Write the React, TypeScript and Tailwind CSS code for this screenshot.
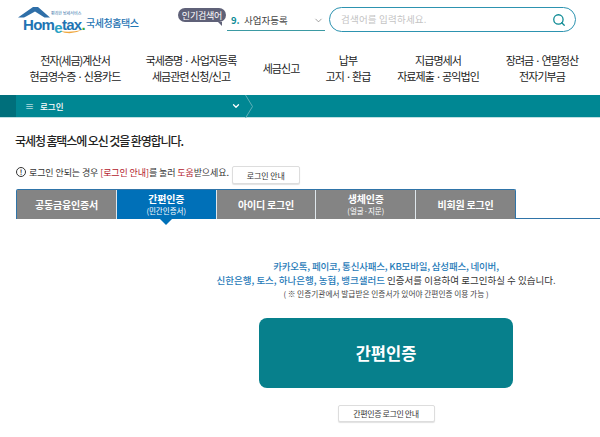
import React from "react";
import { ChevronDown, Search } from "lucide-react";

const kr = { fontFamily: '"Noto Sans CJK KR", "Noto Sans", sans-serif' };

const nav: { a: string; b?: string; w: string }[] = [
  { a: "전자(세금)계산서", b: "현금영수증 · 신용카드", w: "w-[134px]" },
  { a: "국세증명 · 사업자등록", b: "세금관련 신청/신고", w: "w-[98px]" },
  { a: "세금신고", w: "w-[82px]" },
  { a: "납부", b: "고지 · 환급", w: "w-[52px]" },
  { a: "지급명세서", b: "자료제출 · 공익법인", w: "w-[128px]" },
  { a: "장려금 · 연말정산", b: "전자기부금", w: "w-[80px]" },
];

function Tab({ a, b, active }: { a: string; b?: string; active?: boolean }) {
  return (
    <div
      className={`relative flex flex-1 flex-col items-center justify-center text-white ${
        active ? "bg-[#0070b8]" : "bg-[#848484]"
      }`}
    >
      <span className="text-[10px] leading-[12px] font-bold tracking-[-0.2px]">{a}</span>
      {b && <span className="text-[7.5px] leading-[11px]">{b}</span>}
      {active && (
        <span className="absolute top-full left-1/2 -ml-[6px] h-0 w-0 border-x-[6px] border-t-[6px] border-x-transparent border-t-[#0070b8]" />
      )}
    </div>
  );
}

export default function App() {
  return (
    <div className="h-[437px] w-[600px] overflow-hidden bg-white text-[#222]" style={kr}>
      {/* top header */}
      <header className="flex h-[46px] items-start">
        <div className="relative mt-[6px] ml-[18px] h-[30px] w-[124px] shrink-0">
          <svg className="absolute top-0 left-0" width="66" height="30" viewBox="0 0 66 30">
            <path d="M0 11.5 L15 1 L20 1 L32 11.5 L26.5 11.5 L17 5.5 L8 10.5 L6 11.5 Z" fill="#2f6fa8" />
            <path d="M42 25 Q 52 30 64 24 Q 52 27 42 25 Z" fill="#f0a63c" />
          </svg>
          <span className="absolute top-[4px] left-[33px] text-[4px] leading-[6px] whitespace-nowrap text-[#2f6fa8]">
            편리한 납세서비스
          </span>
          <span
            className="absolute top-[9px] left-[5px] flex items-baseline text-[15px] leading-[20px] font-bold tracking-[-0.7px] text-[#1f74b3]"
            style={{ fontFamily: '"Liberation Sans", sans-serif' }}
          >
            Hom
            <span className="relative top-[3px] text-[#2aa3c6]">e</span>
            tax
            <span className="text-[#3aa845]">.</span>
          </span>
          <span className="absolute top-[9px] left-[68px] text-[10px] leading-[16px] font-medium tracking-[-0.45px] whitespace-nowrap text-[#1f74b3]">
            국세청홈택스
          </span>
        </div>

        <div className="relative mt-[8px] ml-[36px] flex h-[14px] w-[48px] shrink-0 items-center justify-center rounded-full bg-[#5f6178] text-[9px] leading-none tracking-[-0.2px] text-white">
          인기검색어
          <span className="absolute top-full right-[4px] h-0 w-0 border-t-[4px] border-l-[4px] border-t-[#5f6178] border-l-transparent" />
        </div>

        <div className="mt-[11px] ml-[1px] flex h-[20px] w-[98px] shrink-0 items-center border-b border-[#3b9aa3] pl-[4px] text-[9.5px]">
          <span className="w-[13px] font-bold text-[#0a8a96]">9.</span>
          <span className="text-[#444]">사업자등록</span>
          <ChevronDown className="mr-[1px] ml-auto size-[11px] text-[#777]" strokeWidth={1.5} />
        </div>

        <div className="mt-[7px] ml-[4px] flex h-[25px] w-[247px] shrink-0 items-center rounded-full border border-[#2d93b0] pr-[9px] pl-[11px]">
          <span className="text-[9.5px] tracking-[0.2px] text-[#c4c4c4]">검색어를 입력하세요.</span>
          <Search className="ml-auto size-[14px] text-[#0d8a94]" strokeWidth={2.2} />
        </div>
      </header>

      {/* main nav */}
      <nav className="flex h-[49px] items-start pt-[6px] pl-[8px] text-[11px] leading-[16px] tracking-[-0.95px] text-[#222]">
        {nav.map((n) => (
          <div
            key={n.a}
            className={`flex h-[32px] shrink-0 flex-col items-center justify-center whitespace-nowrap ${n.w}`}
          >
            <span>{n.a}</span>
            {n.b && <span>{n.b}</span>}
          </div>
        ))}
      </nav>

      {/* location bar */}
      <div className="flex h-[23px] items-center border-b border-[#bfdfe2] bg-[#008793] text-white">
        <div className="h-full w-[16px] bg-[#006f7b]" />
        <span className="ml-[9px] w-[6px] text-[9px] leading-none">≡</span>
        <span className="ml-[9px] w-[25px] text-[8.5px] font-medium whitespace-nowrap">로그인</span>
        <ChevronDown className="ml-[166px] size-[10px]" strokeWidth={3} />
        <svg className="ml-[4px]" width="9" height="23" viewBox="0 0 9 23">
          <path d="M0.5 0 L7.5 11.5 L0.5 23" fill="none" stroke="#5fb0b8" strokeWidth="1" />
        </svg>
      </div>

      {/* body */}
      <main className="pt-[14px]">
        <h1 className="ml-[15px] text-[12px] leading-[18px] font-medium tracking-[-1.1px] text-[#222]">
          국세청 홈택스에 오신 것을 환영합니다.
        </h1>

        <div className="mt-[16px] ml-[16px] flex h-[18px] items-start text-[9px] leading-[13px] tracking-[-0.1px] text-[#333]">
          <span className="mt-[1px] flex size-[10px] items-center justify-center rounded-full border border-[#333] text-[7px] leading-none font-bold">
            !
          </span>
          <span className="ml-[3px]">
            로그인 안되는 경우 <span className="text-[#b3202c]">[로그인 안내]</span>를 눌러{" "}
            <span className="text-[#b3202c]">도움</span>받으세요.
          </span>
          <button className="ml-[3px] h-[18px] w-[68px] rounded-[2px] border border-[#ddd] bg-white text-[8px] text-[#333] shadow-[0_1px_1px_rgba(0,0,0,0.12)]">
            로그인 안내
          </button>
        </div>

        {/* tabs */}
        <div className="mt-[5px] flex">
          <div className="ml-[16px] flex h-[30px] w-[500px] shrink-0 gap-[1px] rounded-t-[2px] border-x border-t border-[#2f74a8] bg-[#dfe7ec]">
            <Tab a="공동금융인증서" />
            <Tab a="간편인증" b="(민간인증서)" active />
            <Tab a="아이디 로그인" />
            <Tab a="생체인증" b="(얼굴·지문)" />
            <Tab a="비회원 로그인" />
          </div>
          <div className="flex-1 border-b border-[#2f74a8]" />
        </div>

        {/* simple auth */}
        <section className="mt-[40px] ml-[172px] flex w-[428px] flex-col items-center">
          <p className="text-[9.5px] leading-[14px] font-medium tracking-[-0.2px] whitespace-nowrap text-[#1f7ab8]">
            카카오톡, 페이코, 통신사패스, KB모바일, 삼성패스, 네이버,
          </p>
          <p className="text-[9.5px] leading-[14px] whitespace-nowrap text-[#333]">
            <span className="font-medium text-[#1f7ab8]">신한은행, 토스, 하나은행, 농협, 뱅크샐러드</span> 인증서를 이용하여 로그인하실 수 있습니다.
          </p>
          <p className="text-[7.7px] leading-[14px] whitespace-nowrap text-[#444]">
            ( ※ 인증기관에서 발급받은 인증서가 있어야 간편인증 이용 가능 )
          </p>
          <button className="mt-[17px] h-[70px] w-[254px] rounded-[8px] bg-[#07808c] text-[16.5px] font-bold text-white">
            간편인증
          </button>
          <button className="mt-[17px] h-[17px] w-[97px] rounded-[2px] border border-[#ddd] bg-white text-[8px] tracking-[-0.4px] text-[#333] shadow-[0_1px_1px_rgba(0,0,0,0.12)]">
            간편인증 로그인 안내
          </button>
        </section>
      </main>
    </div>
  );
}
